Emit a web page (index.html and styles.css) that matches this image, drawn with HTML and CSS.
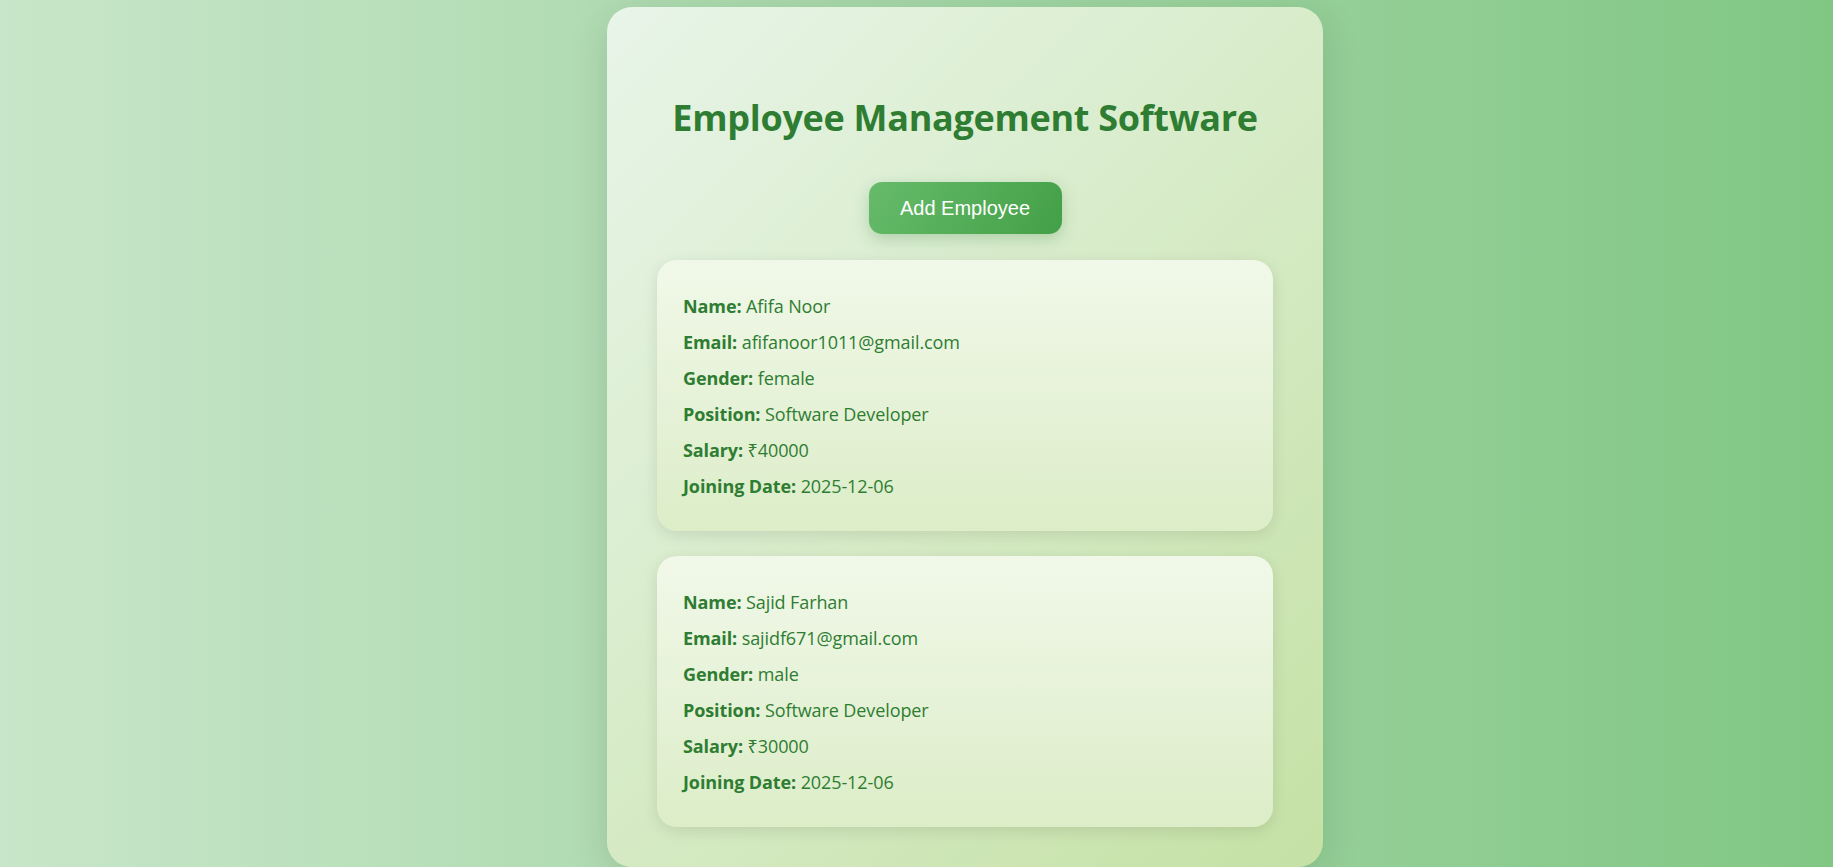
FILE: index.html
```html
<!DOCTYPE html>
<html lang="en">
<head>
<meta charset="UTF-8">
<title>Employee Management Software</title>
<link rel="stylesheet" href="styles.css">
</head>
<body>
<div class="page">
  <main class="container">
    <h1 class="title">Employee Management Software</h1>
    <div class="actions">
      <button class="add-btn" type="button">Add Employee</button>
    </div>
    <section class="list">
      <article class="card">
        <p class="row"><strong>Name:</strong> Afifa Noor</p>
        <p class="row"><strong>Email:</strong> afifanoor1011@gmail.com</p>
        <p class="row"><strong>Gender:</strong> female</p>
        <p class="row"><strong>Position:</strong> Software Developer</p>
        <p class="row"><strong>Salary:</strong> ₹40000</p>
        <p class="row"><strong>Joining Date:</strong> 2025-12-06</p>
      </article>
      <article class="card">
        <p class="row"><strong>Name:</strong> Sajid Farhan</p>
        <p class="row"><strong>Email:</strong> sajidf671@gmail.com</p>
        <p class="row"><strong>Gender:</strong> male</p>
        <p class="row"><strong>Position:</strong> Software Developer</p>
        <p class="row"><strong>Salary:</strong> ₹30000</p>
        <p class="row"><strong>Joining Date:</strong> 2025-12-06</p>
      </article>
    </section>
  </main>
</div>
</body>
</html>
```

FILE: styles.css
```css
* {
  box-sizing: border-box;
}

html, body {
  margin: 0;
  padding: 0;
}

body {
  min-height: 100vh;
  background: linear-gradient(to right, #c8e6c9, #81c784);
  font-family: "Open Sans", "Noto Sans", sans-serif;
  color: #2e7d32;
  overflow: hidden;
}

.page {
  display: flex;
  padding: 7px 0 0 607px;
}

.container {
  width: 716px;
  padding: 40px 50px 40px;
  border-radius: 25px;
  background: linear-gradient(135deg, #e8f5e9, #c5e1a5);
  box-shadow: 0 10px 40px rgba(0, 0, 0, 0.12);
}

.title {
  margin: 49px 0 0;
  font-size: 36px;
  line-height: 43px;
  font-weight: 700;
  text-align: center;
  letter-spacing: -0.3px;
  color: #2e7d32;
}

.actions {
  display: flex;
  justify-content: center;
  margin-top: 43px;
}

.add-btn {
  height: 52px;
  width: 193px;
  padding: 0;
  border: none;
  border-radius: 13px;
  background: linear-gradient(120deg, #66bb6a, #43a047);
  color: #ffffff;
  font-family: "Liberation Sans", Arial, sans-serif;
  font-size: 20px;
  box-shadow: 0 5px 15px rgba(76, 140, 80, 0.3);
}

.list {
  display: flex;
  flex-direction: column;
  gap: 25px;
  margin-top: 26px;
}

.card {
  padding: 23px 26px 22px;
  border-radius: 20px;
  background: linear-gradient(to bottom, #f1f8e9, #dcedc8);
  box-shadow: 0 4px 15px rgba(0, 0, 0, 0.1);
}

.row {
  margin: 10px 0;
  font-size: 18px;
  line-height: 26px;
  letter-spacing: -0.1px;
  color: #2e7d32;
}

.row strong {
  font-weight: 700;
}
```
